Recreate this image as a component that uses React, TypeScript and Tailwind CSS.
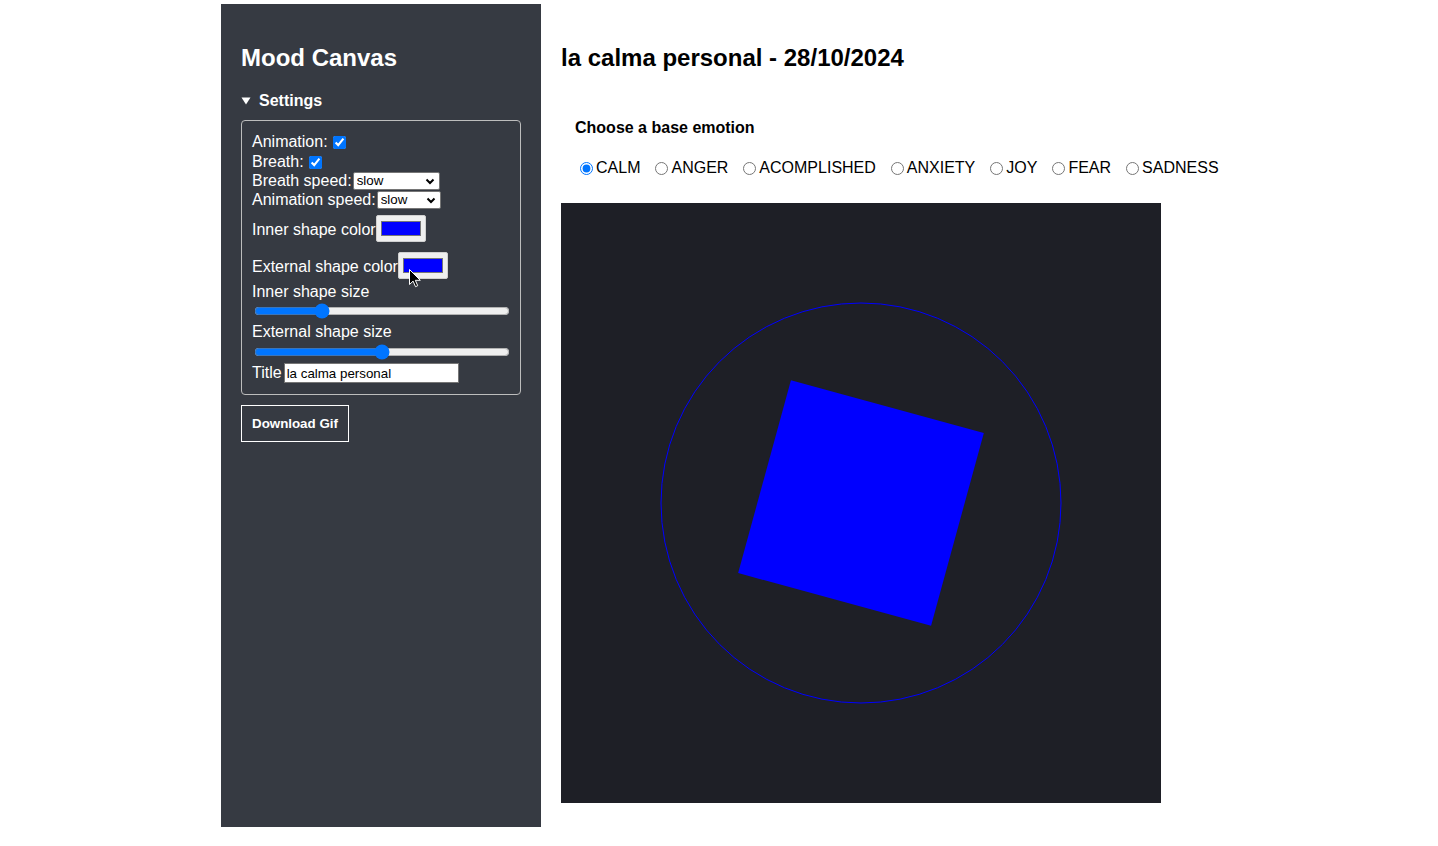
import React from 'react'

const emotions = ['CALM', 'ANGER', 'ACOMPLISHED', 'ANXIETY', 'JOY', 'FEAR', 'SADNESS']

function Chevron() {
  return (
    <svg width="10" height="7" viewBox="0 0 10 7" className="absolute right-[5px] top-[6px] pointer-events-none">
      <path d="M1.5 1.5l3.5 3.5 3.5-3.5" stroke="#000" strokeWidth="2" fill="none" />
    </svg>
  )
}

function Swatch({ cursor }: { cursor?: boolean }) {
  return (
    <span className="relative inline-flex w-[50px] h-[27px] items-center justify-center bg-[#efefef] border border-[#d0d0d0] rounded-[2px]">
      <span className="block w-[40px] h-[15px] bg-[#0000ff] border border-[#777777]" />
      {cursor && (
        <svg width="12" height="19" viewBox="0 0 12 19" className="absolute left-[10px] top-[16px]">
          <path d="M0.5 0.5v15l3.6-3.4 2.4 5.6 2.2-1-2.4-5.4h5z" fill="#000" stroke="#fff" strokeWidth="1" />
        </svg>
      )}
    </span>
  )
}

export default function App() {
  const [emotion, setEmotion] = React.useState('CALM')
  const [animation, setAnimation] = React.useState(true)
  const [breath, setBreath] = React.useState(true)
  const [inner, setInner] = React.useState(25)
  const [outer, setOuter] = React.useState(50)
  const [title, setTitle] = React.useState('la calma personal')

  return (
    <div className="min-h-screen bg-white font-['Liberation_Sans',Arial,sans-serif]">
      <div className="w-[996px] mx-auto pt-1 flex">
        <aside className="w-[320px] h-[823px] shrink-0 bg-[#363a42] px-5 pt-10 text-white">
          <h2 className="text-[24px] leading-[27px] font-bold">Mood Canvas</h2>
          <div className="mt-5">
            <div className="h-[18px] pt-[2px] flex items-center text-base font-bold">
              <svg width="10" height="8" viewBox="0 0 10 8" className="mr-[8px]">
                <path d="M0.5 0.5h9L5 7.5z" fill="#fff" />
              </svg>
              Settings
            </div>
            <div className="mt-[11px] w-[280px] border border-[#bdbdbd] rounded-[4px] px-[10px] pt-[11px] pb-[10px] text-base">
              <div className="h-[20px] flex items-center">
                Animation:
                <input type="checkbox" checked={animation} onChange={(e) => setAnimation(e.target.checked)} className="ml-[5px] w-[13px] h-[13px]" />
              </div>
              <div className="h-[19px] flex items-center">
                Breath:
                <input type="checkbox" checked={breath} onChange={(e) => setBreath(e.target.checked)} className="ml-[5px] mt-[2px] w-[13px] h-[13px]" />
              </div>
              <div className="h-[19px] flex items-center">
                Breath speed:
                <span className="relative ml-[1px]">
                  <select className="appearance-none block w-[87px] h-[18px] bg-white border border-[#767676] rounded-[2px] pl-[3px] text-[13.33px] leading-[16px] text-black">
                    <option>slow</option>
                    <option>medium</option>
                    <option>fast</option>
                  </select>
                  <Chevron />
                </span>
              </div>
              <div className="h-[19px] flex items-center">
                Animation speed:
                <span className="relative ml-[1px]">
                  <select className="appearance-none block w-[64px] h-[18px] bg-white border border-[#767676] rounded-[2px] pl-[3px] text-[13.33px] leading-[16px] text-black">
                    <option>slow</option>
                    <option>medium</option>
                    <option>fast</option>
                  </select>
                  <Chevron />
                </span>
              </div>
              <div className="mt-[6px] h-[27px] flex items-center">
                <span className="pt-[3px]">Inner shape color</span>
                <Swatch />
              </div>
              <div className="mt-[10px] h-[27px] flex items-center">
                <span className="pt-[3px]">External shape color</span>
                <Swatch cursor />
              </div>
              <div className="mt-[4px] leading-[18px]">Inner shape size</div>
              <div className="h-[20px] pl-[2px] flex items-center">
                <input type="range" min={0} max={100} value={inner} onChange={(e) => setInner(Number(e.target.value))} className="w-[258px] accent-[#0075ff]" />
              </div>
              <div className="leading-[21px]">External shape size</div>
              <div className="h-[20px] pl-[2px] flex items-center">
                <input type="range" min={0} max={100} value={outer} onChange={(e) => setOuter(Number(e.target.value))} className="w-[258px] accent-[#0075ff]" />
              </div>
              <div className="h-[22px] flex items-start">
                <span className="leading-[20px] pt-[1px]">Title</span>
                <input type="text" value={title} onChange={(e) => setTitle(e.target.value)} className="ml-[2px] mt-[1px] w-[175px] h-[20px] bg-white border border-[#767676] px-[2px] text-[13.33px] text-black outline-none" />
              </div>
            </div>
            <button className="mt-[10px] h-[37px] px-[10px] border border-white text-[13.33px] font-bold text-white">Download Gif</button>
          </div>
        </aside>

        <main className="pl-5 pt-10">
          <h2 className="text-[24px] leading-[27px] font-bold text-black">{title} - 28/10/2024</h2>
          <div className="pl-[14px] mt-[48px]">
            <h4 className="text-base font-bold leading-[18px] text-black">Choose a base emotion</h4>
            <div className="mt-[22px] h-[18px] flex items-center gap-[10px] text-base text-black">
              {emotions.map((em) => (
                <label key={em} className="flex items-center">
                  <input type="radio" name="emotion" checked={emotion === em} onChange={() => setEmotion(em)} className="ml-[5px] mr-[3px] w-[13px] h-[13px] accent-[#0075ff]" />
                  {em}
                </label>
              ))}
            </div>
          </div>
          <div className="mt-[26px] w-[600px] h-[600px] bg-[#1e1f26]">
            <svg width="600" height="600" viewBox="0 0 600 600">
              <circle cx="300" cy="300" r="200" fill="none" stroke="#0000ff" strokeWidth="1" />
              <rect x="200" y="200" width="200" height="200" fill="#0000ff" transform="rotate(15.3 300 300)" />
            </svg>
          </div>
        </main>
      </div>
    </div>
  )
}
